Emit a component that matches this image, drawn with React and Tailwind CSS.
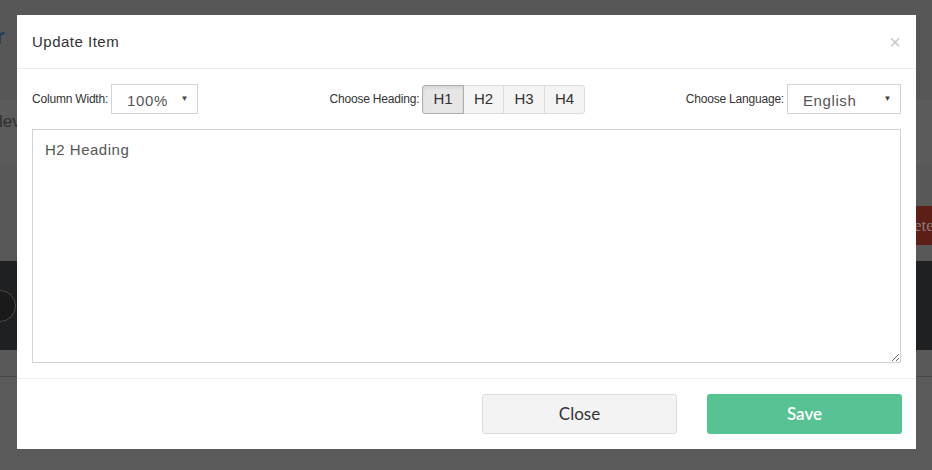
import React, { useState } from "react";

const label = "text-[12px] tracking-[-0.2px] text-[#333] mr-[3px]";

function Select({ value, width }) {
  return (
    <div
      className={`relative flex h-[30px] items-center border border-[#cfd4dc] bg-white pl-[15px] text-[15px] tracking-[0.6px] text-[#555] ${width}`}
    >
      <span className="pt-[5px]">{value}</span>
      <span className="absolute right-[8px] top-[8px] text-[8px] text-[#444]">▼</span>
    </div>
  );
}

function HeadingGroup() {
  const [active, setActive] = useState("H1");
  return (
    <div className="flex h-[29px]">
      {["H1", "H2", "H3", "H4"].map((h, i) => (
        <button
          key={h}
          onClick={() => setActive(h)}
          className={
            "flex w-[41.5px] items-center justify-center border text-[15px] text-[#333] " +
            (i > 0 ? "-ml-px " : "") +
            (i === 0 ? "rounded-l-[3px] " : "") +
            (i === 3 ? "rounded-r-[3px] " : "") +
            (active === h
              ? "relative z-10 border-[#adadad] bg-[#e6e6e6] shadow-[inset_0_2px_3px_rgba(0,0,0,0.08)]"
              : "border-[#dcdcdc] bg-[#f4f4f4]")
          }
        >
          {h}
        </button>
      ))}
    </div>
  );
}

export default function App() {
  return (
    <div
      className="relative h-[470px] w-[932px] overflow-hidden bg-[#5a5a5a]"
      style={{ fontFamily: "'Liberation Sans', Arial, sans-serif" }}
    >
      {/* dimmed page behind the modal */}
      <div className="flex h-[100px] bg-[#575757] pt-[20px]">
        <span className="-ml-[4px] text-[22px] font-bold text-[#24395a]">r</span>
      </div>
      <div className="flex h-[65px] items-start bg-[#5b5b5b] pt-[9px]">
        <span className="-ml-[1px] text-[17px] text-[#2e2e2e]">lev</span>
      </div>
      <div className="flex h-[96px] items-start justify-end bg-[#585858] pt-[41px]">
        <div
          className="flex h-[39px] w-[17px] items-center overflow-hidden bg-[#5b1f18] text-[17px] text-[#8a7a78]"
          style={{ fontFamily: "'Liberation Serif', serif" }}
        >
          <span className="-ml-[1px]">ete</span>
        </div>
      </div>
      <div className="flex h-[89px] items-center bg-[#1f2022]">
        <div className="-ml-[16px] h-[32px] w-[32px] rounded-full border border-[#4a4a4a] bg-[#1a1a1a]" />
      </div>
      <div className="h-[26px] bg-[#595959]" />
      <div className="h-px bg-[#474747]" />

      {/* modal */}
      <div className="absolute left-[17px] top-[15px] flex h-[434px] w-[899px] flex-col bg-white">
        <div className="flex h-[54px] items-center justify-between border-b border-[#ececec] px-[15px]">
          <h4 className="pt-[2px] text-[15px] tracking-[0.5px] text-[#333]">Update Item</h4>
          <span className="text-[20px] leading-none text-[#c8c8c8]">×</span>
        </div>

        <div className="flex flex-col px-[15px] pt-[15px] pb-[15px]">
          <div className="flex h-[30px] items-center justify-between">
            <div className="flex items-center">
              <span className={label}>Column Width:</span>
              <Select value="100%" width="w-[87px]" />
            </div>
            <div className="ml-[31px] flex items-center">
              <span className={label}>Choose Heading:</span>
              <HeadingGroup />
            </div>
            <div className="flex items-center">
              <span className={label}>Choose Language:</span>
              <Select value="English" width="w-[114px]" />
            </div>
          </div>
          <textarea
            defaultValue="H2 Heading"
            className="mt-[15px] h-[234px] w-full border border-[#cfd4dc] px-[12px] py-[9px] text-[15px] tracking-[0.5px] text-[#555] outline-none"
          />
        </div>

        <div className="flex flex-1 items-start justify-end gap-[30px] border-t border-[#efefef] px-[14px] pt-[15px]">
          <button
            className="h-[40px] w-[195px] rounded-[3px] border border-[#dcdcdc] bg-[#f3f3f3] text-[17px] text-[#333]"
            style={{ fontFamily: "Lato, sans-serif" }}
          >
            Close
          </button>
          <button
            className="h-[40px] w-[195px] rounded-[3px] bg-[#57c393] text-[17px] font-semibold text-white"
            style={{ fontFamily: "Lato, sans-serif" }}
          >
            Save
          </button>
        </div>
      </div>
    </div>
  );
}
